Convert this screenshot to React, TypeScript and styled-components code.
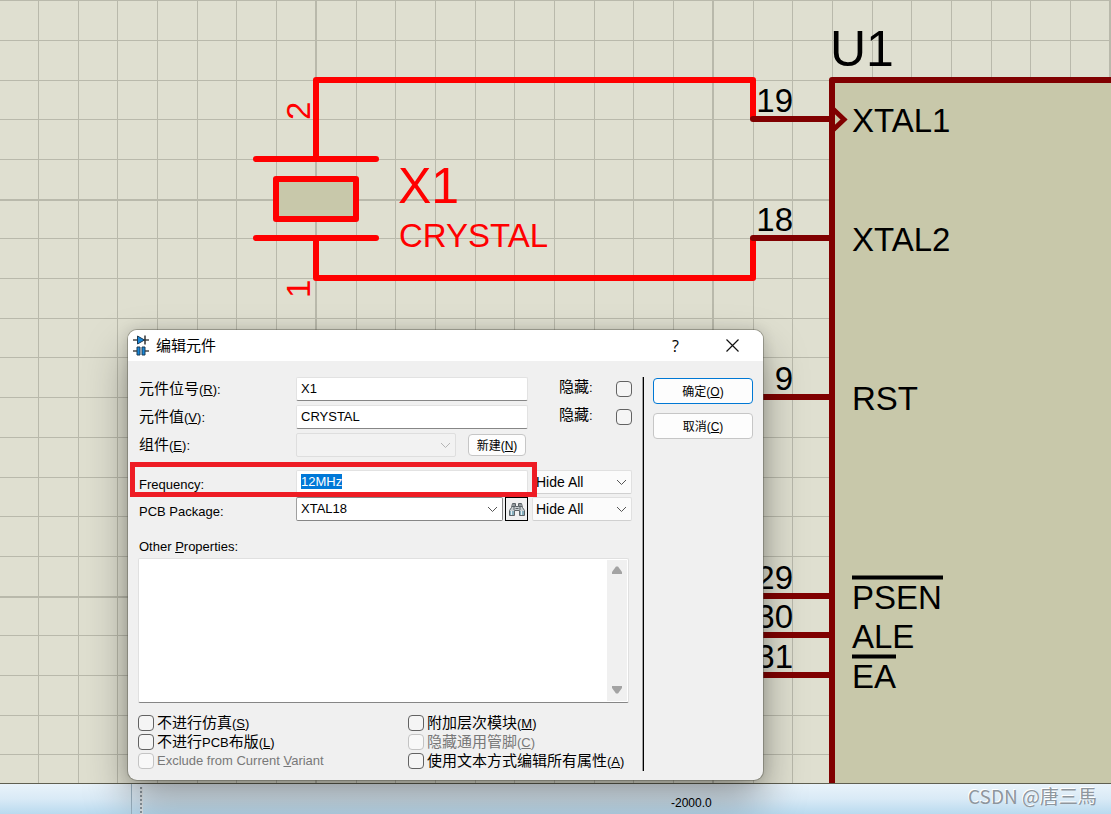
import React, { useEffect, useRef } from "react";
import styled, { createGlobalStyle, css } from "styled-components";

const UI = '"Liberation Sans", "Noto Sans CJK SC", sans-serif';

const GlobalStyle = createGlobalStyle`
  *, *::before, *::after { box-sizing: border-box; }
  body { margin: 0; font-family: ${UI}; color: #000; }
  button, input, select, textarea { font: inherit; color: inherit; margin: 0; }
`;

const Page = styled.div`
  display: flex;
  flex-direction: column;
  min-height: 100vh;
  overflow: hidden;
`;

const Workspace = styled.main`
  position: relative;
  display: flex;
  flex: 1;
  min-height: 780px;
  background: #dfdfd0;
  border-bottom: 1px solid #5f5f50;
`;

const Sheet = styled.svg`
  flex: 1;
  min-width: 0;
  display: block;
  font-family: "Liberation Sans", sans-serif;
  font-size: 33px;
`;

const StatusBar = styled.footer`
  display: flex;
  align-items: stretch;
  height: 30px;
  background: linear-gradient(#e9f3fa, #d9eaf6 50%, #b9daef);
  font-size: 12px;
`;

const StatusPane = styled.div`
  width: 132px;
  border-right: 1px solid #9db4c4;
`;

const Grip = styled.div`
  width: 3px;
  margin: 3px 0 0 8px;
  border-right: 1px solid #dfe6ea;
  background: repeating-linear-gradient(#8b969e 0 2px, #dfe6ea 2px 4px);
`;

const Coordinate = styled.output`
  flex: 1;
  padding: 11px 0 0 528px;
  line-height: 16px;
`;

const Watermark = styled.span`
  position: relative;
  z-index: 2;
  padding-right: 14px;
  font-family: "Noto Sans CJK SC", sans-serif;
  font-size: 19px;
  line-height: 24px;
  color: #8e969d;
  text-shadow: -1px -1px 0 #fff;
`;

const Dialog = styled.section`
  position: absolute;
  z-index: 1;
  left: 128px;
  top: 330px;
  width: 635px;
  background: #f0f0f0;
  border-radius: 9px;
  box-shadow: 0 0 0 1px rgba(90, 90, 80, 0.45), 0 0 14px rgba(0, 0, 0, 0.16),
    0 22px 44px rgba(0, 0, 0, 0.34);
  font-size: 13px;
`;

const TitleBar = styled.header`
  display: flex;
  align-items: center;
  height: 31px;
  padding-left: 5px;
  gap: 7px;
  background: #fff;
  border-radius: 9px 9px 0 0;
`;

const Title = styled.h1`
  flex: 1;
  margin: 0;
  font-size: 15px;
  font-weight: 400;
  line-height: 20px;
`;

const CaptionButtons = styled.div`
  display: flex;
  padding-right: 2px;
`;

const CaptionButton = styled.button`
  display: grid;
  place-items: center;
  width: 57px;
  height: 30px;
  padding: 0;
  border: 0;
  background: none;
  font-family: "Open Sans", sans-serif;
  font-size: 16px;
  line-height: 20px;
`;

const Body = styled.form`
  display: flex;
  padding: 16px 10px 9px;
`;

const Fields = styled.div`
  flex: 1;
  min-width: 0;
`;

const FieldGrid = styled.div<{ $gap: number }>`
  display: grid;
  grid-template-columns: 158px 232px 1fr;
  grid-auto-rows: 24px;
  row-gap: ${(p) => p.$gap}px;
`;

const Caption = styled.label<{ $size?: number; $drop?: boolean }>`
  padding-left: 1px;
  padding-top: ${(p) => (p.$drop ? 5 : 2)}px;
  font-size: ${(p) => p.$size ?? 15}px;
  line-height: 20px;
  white-space: nowrap;
`;

const Latin = styled.span`
  font-size: 13px;
`;

const fieldBox = css`
  height: 24px;
  border: 1px solid #e2e2e2;
  border-bottom-color: #868686;
  border-radius: 2px;
  background: #fff;
  outline: none;
`;

const TextInput = styled.input`
  ${fieldBox}
  width: 100%;
  padding: 0 4px 2px;
  line-height: 16px;
  &::selection { background: #0078d7; color: #fff; }
`;

const SelectBox = styled.span<{ $width: number }>`
  display: grid;
  width: ${(p) => p.$width}px;
  & > * { grid-area: 1 / 1; }
  & > svg { place-self: center end; margin-right: 5px; pointer-events: none; }
`;

const Select = styled.select<{ $look?: "field" | "button" }>`
  ${fieldBox}
  appearance: none;
  width: 100%;
  padding: 0 20px 2px 4px;
  opacity: 1;
  ${(p) =>
    p.$look === "field"
      ? css`border-color: #868686 #868686 #868686 #a0a0a0;`
      : css`background: #fbfbfb; border-color: #e0e0e0 #e0e0e0 #d0d0d0; font-size: 14px; padding: 0 20px 0 3px;`}
  &:disabled { background: #f2f2f2; border-color: #dedede; }
`;

const FieldRow = styled.div<{ $gap?: number }>`
  display: flex;
  align-items: center;
  gap: ${(p) => p.$gap ?? 0}px;
`;

const HideRow = styled.label`
  display: flex;
  justify-content: space-between;
  align-items: center;
  padding-left: 31px;
  font-size: 15px;
`;

const HideText = styled.span`
  padding-bottom: 4px;
  line-height: 20px;
`;

const VisibilityCell = styled.div`
  padding-left: 4px;
`;

const Check = styled.input`
  appearance: none;
  flex: none;
  width: 16px;
  height: 16px;
  margin: 0;
  border: 1px solid #626262;
  border-radius: 4px;
  background: #f5f5f5;
  &:disabled { border-color: #c4c4c4; background: #f8f8f8; }
`;

const Button = styled.button<{ $primary?: boolean; $small?: boolean }>`
  width: ${(p) => (p.$small ? "58px" : "100%")};
  height: ${(p) => (p.$small ? 22 : 26)}px;
  padding: 2px 0 0;
  border: 1px solid ${(p) => (p.$primary ? "#0078d4" : "#c6c6c6")};
  border-radius: 4px;
  background: #fdfdfd;
  font-size: 12px;
  line-height: 18px;
`;

const FindButton = styled.button`
  display: grid;
  place-items: center;
  width: 23px;
  height: 24px;
  padding: 0;
  border: 1px solid #000;
  background: #f0f0f0;
`;

const PropertyGroup = styled.div`
  position: relative;
  margin-top: 13px;
`;

const Highlight = styled.div`
  position: absolute;
  left: -8px;
  top: -8px;
  width: 407px;
  height: 35px;
  border: 5px solid #ee1c24;
  pointer-events: none;
`;

const OtherLabel = styled.label`
  display: block;
  padding: 17px 0 2px 1px;
  line-height: 18px;
`;

const TextAreaFrame = styled.div`
  display: flex;
  height: 145px;
  margin-right: 3px;
  border: 1px solid #e0e0e0;
  border-bottom-color: #868686;
  border-radius: 2px;
  background: #fff;
`;

const TextArea = styled.textarea`
  flex: 1;
  min-width: 0;
  border: 0;
  outline: none;
  resize: none;
  background: none;
`;

const ScrollTrack = styled.div`
  display: flex;
  flex-direction: column;
  justify-content: space-between;
  align-items: center;
  width: 20px;
  margin: 1px 1px 1px 0;
  padding: 6px 0 7px;
  background: #f0f0f0;
`;

const Options = styled.div`
  display: grid;
  grid-template-columns: 270px 1fr;
  grid-auto-flow: column;
  grid-template-rows: repeat(3, 19px);
  padding: 10px 0 1px;
`;

const Option = styled.label<{ $disabled?: boolean; $size?: number }>`
  display: flex;
  align-items: center;
  gap: 3px;
  font-size: ${(p) => p.$size ?? 15}px;
  line-height: 19px;
  white-space: nowrap;
  color: ${(p) => (p.$disabled ? "#787878" : "#000")};
`;

const Divider = styled.div`
  width: 2px;
  margin: 0 9px 0 10px;
  border-left: 1px solid #a0a0a0;
  background: #000;
`;

const Actions = styled.div`
  display: flex;
  flex-direction: column;
  gap: 9px;
  width: 100px;
  padding-top: 1px;
`;

const Key = ({ k }: { k: string }) => (
  <Latin>
    (<u>{k}</u>)
  </Latin>
);

const Chevron = ({ color = "#555" }: { color?: string }) => (
  <svg width="11" height="7" viewBox="0 0 11 7" fill="none" stroke={color} aria-hidden="true">
    <path d="M1 1l4.5 4.5L10 1" />
  </svg>
);

const PartIcon = () => (
  <svg width="16" height="21" viewBox="0 0 16 21" aria-hidden="true">
    <path d="M0 5h16M0 16h5M11 16h5" stroke="#4a4a4a" strokeWidth="1.5" />
    <path d="M4.5 1v8l7-4z" fill="#1686d9" stroke="#1c3a52" />
    <path d="M12 .5v9" stroke="#333" strokeWidth="1.5" />
    <path d="M4 12h3v8H4zM9 12h3v8H9z" fill="#1686d9" stroke="#1c3a52" />
  </svg>
);

const Binoculars = () => (
  <svg width="16" height="14" viewBox="0 0 16 14" aria-hidden="true">
    <path
      d="M3.5 1.5h3v3h3v-3h3l1 4 2 3v5h-5v-5h-5v5h-5v-5l2-3z"
      fill="#c9cfd2"
      stroke="#5b6266"
    />
    <path d="M3 4.500h3.500M9.500 4.500H13M6.500 6.500h3M5 2v6M11 2v6" stroke="#5b6266" />
    <path d="M1 11h4M11 11h4" stroke="#86aebd" strokeWidth="4" />
    <path d="M2.500 9v4M12.500 9v4" stroke="#e3edf1" />
  </svg>
);

const GRID = 39.7;
const steps = Array.from({ length: 80 }, (_, i) => i);

const pins = [
  { no: "19", y: 119, name: "XTAL1" },
  { no: "18", y: 238, name: "XTAL2" },
  { no: "9", y: 397, name: "RST" },
  { no: "29", y: 596, name: "PSEN", bar: 91 },
  { no: "30", y: 635, name: "ALE" },
  { no: "31", y: 675, name: "EA", bar: 44 },
];

const Schematic = () => (
  <Sheet role="img" aria-label="Crystal X1 wired to U1">
    <g stroke="#b9b9ab" shapeRendering="crispEdges">
      {steps.map((i) => {
        const x = Math.floor(38.4 + i * GRID);
        const wide = i % 10 === 7;
        return <line key={i} x1={wide ? x : x + 0.5} x2={wide ? x : x + 0.5} y1="0" y2="100%" strokeWidth={wide ? 2 : 1} />;
      })}
      {steps.map((i) => {
        const y = Math.floor(0.6 + i * GRID);
        const wide = i % 10 === 5;
        return <line key={i} y1={wide ? y + 1 : y + 0.5} y2={wide ? y + 1 : y + 0.5} x1="0" x2="100%" strokeWidth={wide ? 2 : 1} />;
      })}
    </g>

    <g fill="none" stroke="#f00" strokeWidth="6" strokeLinejoin="round">
      <path d="M316 159V80H753V119M316 238V278H753V238" />
      <path d="M256 159H376M256 238H376" strokeLinecap="round" />
      <rect x="276" y="179" width="80" height="40" fill="#c8c8aa" />
    </g>
    <g fill="#f00">
      <text x="398" y="203" fontSize="50">X1</text>
      <text x="399" y="247">CRYSTAL</text>
      <text transform="translate(310 120) rotate(-90)">2</text>
      <text transform="translate(310 298) rotate(-90)">1</text>
    </g>

    <g stroke="#800000" strokeWidth="6" strokeLinejoin="round" fill="none">
      {pins.map((p) => (
        <path key={p.no} d={`M753 ${p.y}H832`} strokeLinecap="round" />
      ))}
      <rect x="832" y="80" width="100%" height="120%" fill="#c8c8aa" />
      <path d="M833 109L844 119.500L833 130" strokeWidth="5" strokeLinejoin="miter" />
    </g>
    <text x="830" y="66" fontSize="50">U1</text>
    {pins.map((p) => (
      <g key={p.no}>
        <text x="793" y={p.y - 7} textAnchor="end">{p.no}</text>
        <text x="852" y={p.y + 13}>{p.name}</text>
        {p.bar && <path d={`M852 ${p.y - 18.5}h${p.bar}`} stroke="#000" strokeWidth="4" />}
      </g>
    ))}
  </Sheet>
);

const HideAll = ({ label }: { label: string }) => (
  <VisibilityCell>
    <SelectBox $width={100}>
      <Select $look="button" aria-label={label}>
        <option>Hide All</option>
      </Select>
      <Chevron />
    </SelectBox>
  </VisibilityCell>
);

const HideCheck = () => (
  <HideRow>
    <HideText>隐藏<Latin>:</Latin></HideText>
    <Check type="checkbox" />
  </HideRow>
);

export default function App() {
  const frequency = useRef<HTMLInputElement>(null);
  useEffect(() => {
    frequency.current?.focus({ preventScroll: true });
    frequency.current?.select();
  }, []);

  return (
    <Page>
      <GlobalStyle />
      <Workspace>
        <Schematic />
        <Dialog role="dialog" aria-labelledby="dialog-title">
          <TitleBar>
            <PartIcon />
            <Title id="dialog-title">编辑元件</Title>
            <CaptionButtons>
              <CaptionButton type="button" aria-label="Help">?</CaptionButton>
              <CaptionButton type="button" aria-label="Close">
                <svg width="13" height="13" viewBox="0 0 13 13" stroke="#111" strokeWidth="1.2" aria-hidden="true">
                  <path d="M.5 .5l12 12M12.5 .5l-12 12" />
                </svg>
              </CaptionButton>
            </CaptionButtons>
          </TitleBar>
          <Body onSubmit={(e) => e.preventDefault()}>
            <Fields>
              <FieldGrid $gap={4}>
                <Caption htmlFor="reference">元件位号<Key k="R" /><Latin>:</Latin></Caption>
                <TextInput id="reference" defaultValue="X1" />
                <HideCheck />
                <Caption htmlFor="value">元件值<Key k="V" /><Latin>:</Latin></Caption>
                <TextInput id="value" defaultValue="CRYSTAL" />
                <HideCheck />
                <Caption htmlFor="element">组件<Key k="E" /><Latin>:</Latin></Caption>
                <FieldRow $gap={12}>
                  <SelectBox $width={160}>
                    <Select id="element" disabled />
                    <Chevron color="#b5b5b5" />
                  </SelectBox>
                  <Button type="button" $small>新建(<u>N</u>)</Button>
                </FieldRow>
              </FieldGrid>
              <PropertyGroup>
                <FieldGrid $gap={3}>
                  <Caption htmlFor="frequency" $size={13} $drop>Frequency:</Caption>
                  <TextInput id="frequency" ref={frequency} defaultValue="12MHz" />
                  <HideAll label="Frequency visibility" />
                  <Caption htmlFor="package" $size={13} $drop>PCB Package:</Caption>
                  <FieldRow $gap={2}>
                    <SelectBox $width={207}>
                      <Select id="package" $look="field"><option>XTAL18</option></Select>
                      <Chevron />
                    </SelectBox>
                    <FindButton type="button" aria-label="Browse packages"><Binoculars /></FindButton>
                  </FieldRow>
                  <HideAll label="PCB Package visibility" />
                </FieldGrid>
                <Highlight />
              </PropertyGroup>
              <OtherLabel htmlFor="other">Other <u>P</u>roperties:</OtherLabel>
              <TextAreaFrame>
                <TextArea id="other" />
                <ScrollTrack>
                  <svg width="10" height="8" viewBox="0 0 10 8" fill="#a3a3a3" aria-hidden="true"><path d="M4 .5h2L10 6v2H0V6z" /></svg>
                  <svg width="10" height="8" viewBox="0 0 10 8" fill="#a3a3a3" aria-hidden="true"><path d="M4 7.5h2L10 2V0H0v2z" /></svg>
                </ScrollTrack>
              </TextAreaFrame>
              <Options>
                <Option><Check type="checkbox" /><span>不进行仿真<Key k="S" /></span></Option>
                <Option><Check type="checkbox" /><span>不进行<Latin>PCB</Latin>布版<Key k="L" /></span></Option>
                <Option $disabled $size={13}><Check type="checkbox" disabled /><span>Exclude from Current <u>V</u>ariant</span></Option>
                <Option><Check type="checkbox" /><span>附加层次模块<Key k="M" /></span></Option>
                <Option $disabled><Check type="checkbox" disabled /><span>隐藏通用管脚<Key k="C" /></span></Option>
                <Option><Check type="checkbox" /><span>使用文本方式编辑所有属性<Key k="A" /></span></Option>
              </Options>
            </Fields>
            <Divider />
            <Actions>
              <Button type="submit" $primary>确定(<u>O</u>)</Button>
              <Button type="button">取消(<u>C</u>)</Button>
            </Actions>
          </Body>
        </Dialog>
      </Workspace>
      <StatusBar>
        <StatusPane />
        <Grip />
        <Coordinate>-2000.0</Coordinate>
        <Watermark>CSDN @唐三馬</Watermark>
      </StatusBar>
    </Page>
  );
}
